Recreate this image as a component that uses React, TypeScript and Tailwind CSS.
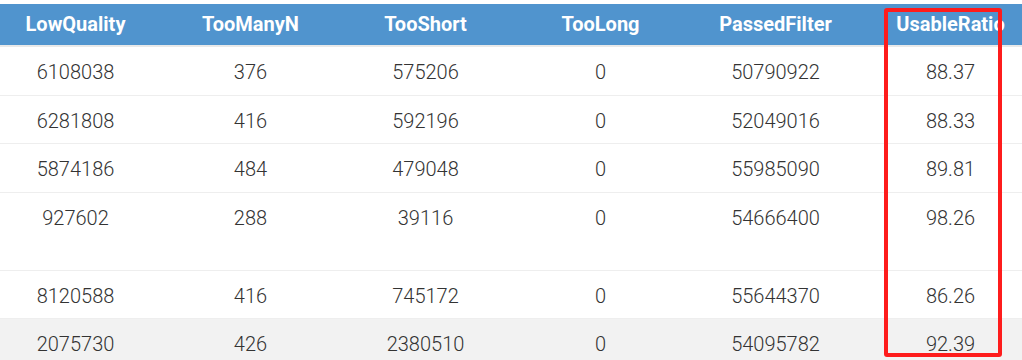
const headers = ["LowQuality", "TooManyN", "TooShort", "TooLong", "PassedFilter", "UsableRatio"];

const rows: { cells: string[]; tall?: boolean; shaded?: boolean }[] = [
  { cells: ["6108038", "376", "575206", "0", "50790922", "88.37"] },
  { cells: ["6281808", "416", "592196", "0", "52049016", "88.33"] },
  { cells: ["5874186", "484", "479048", "0", "55985090", "89.81"] },
  { cells: ["927602", "288", "39116", "0", "54666400", "98.26"], tall: true },
  { cells: ["8120588", "416", "745172", "0", "55644370", "86.26"] },
  { cells: ["2075730", "426", "2380510", "0", "54095782", "92.39"], shaded: true },
];

export default function App() {
  return (
    <div className="relative h-[360px] w-[1022px] overflow-hidden bg-white pt-1 font-['Roboto',sans-serif]">
      <table className="ml-[-12px] w-[1050px] table-fixed border-separate border-spacing-0">
        <thead>
          <tr className="text-[20px] font-bold text-white">
            {headers.map((h) => (
              <th
                key={h}
                className="h-[43px] w-[175px] border-b-2 border-[#e9e9e9] bg-[#5094ce] p-0 pb-[1px] text-center align-middle"
              >
                {h}
              </th>
            ))}
          </tr>
        </thead>
        <tbody className="text-[20px] font-light text-[#333]">
          {rows.map((r, i) => (
            <tr key={i} className={r.shaded ? "bg-[#f2f2f2]" : ""}>
              {r.cells.map((c, j) => (
                <td
                  key={j}
                  className={
                    (r.tall ? "h-[78px] " : "h-[48.5px] ") +
                    (r.shaded ? "" : "border-b border-[#eeeeee] ") +
                    "p-0 pt-[13px] text-center align-top leading-[24px]"
                  }
                >
                  {c}
                </td>
              ))}
            </tr>
          ))}
        </tbody>
      </table>

      {/* highlight box drawn over the last column */}
      <div className="absolute left-[884px] top-[8px] h-[349px] w-[118px] rounded-[3px] border-4 border-[#fe1c1c]" />
    </div>
  );
}
